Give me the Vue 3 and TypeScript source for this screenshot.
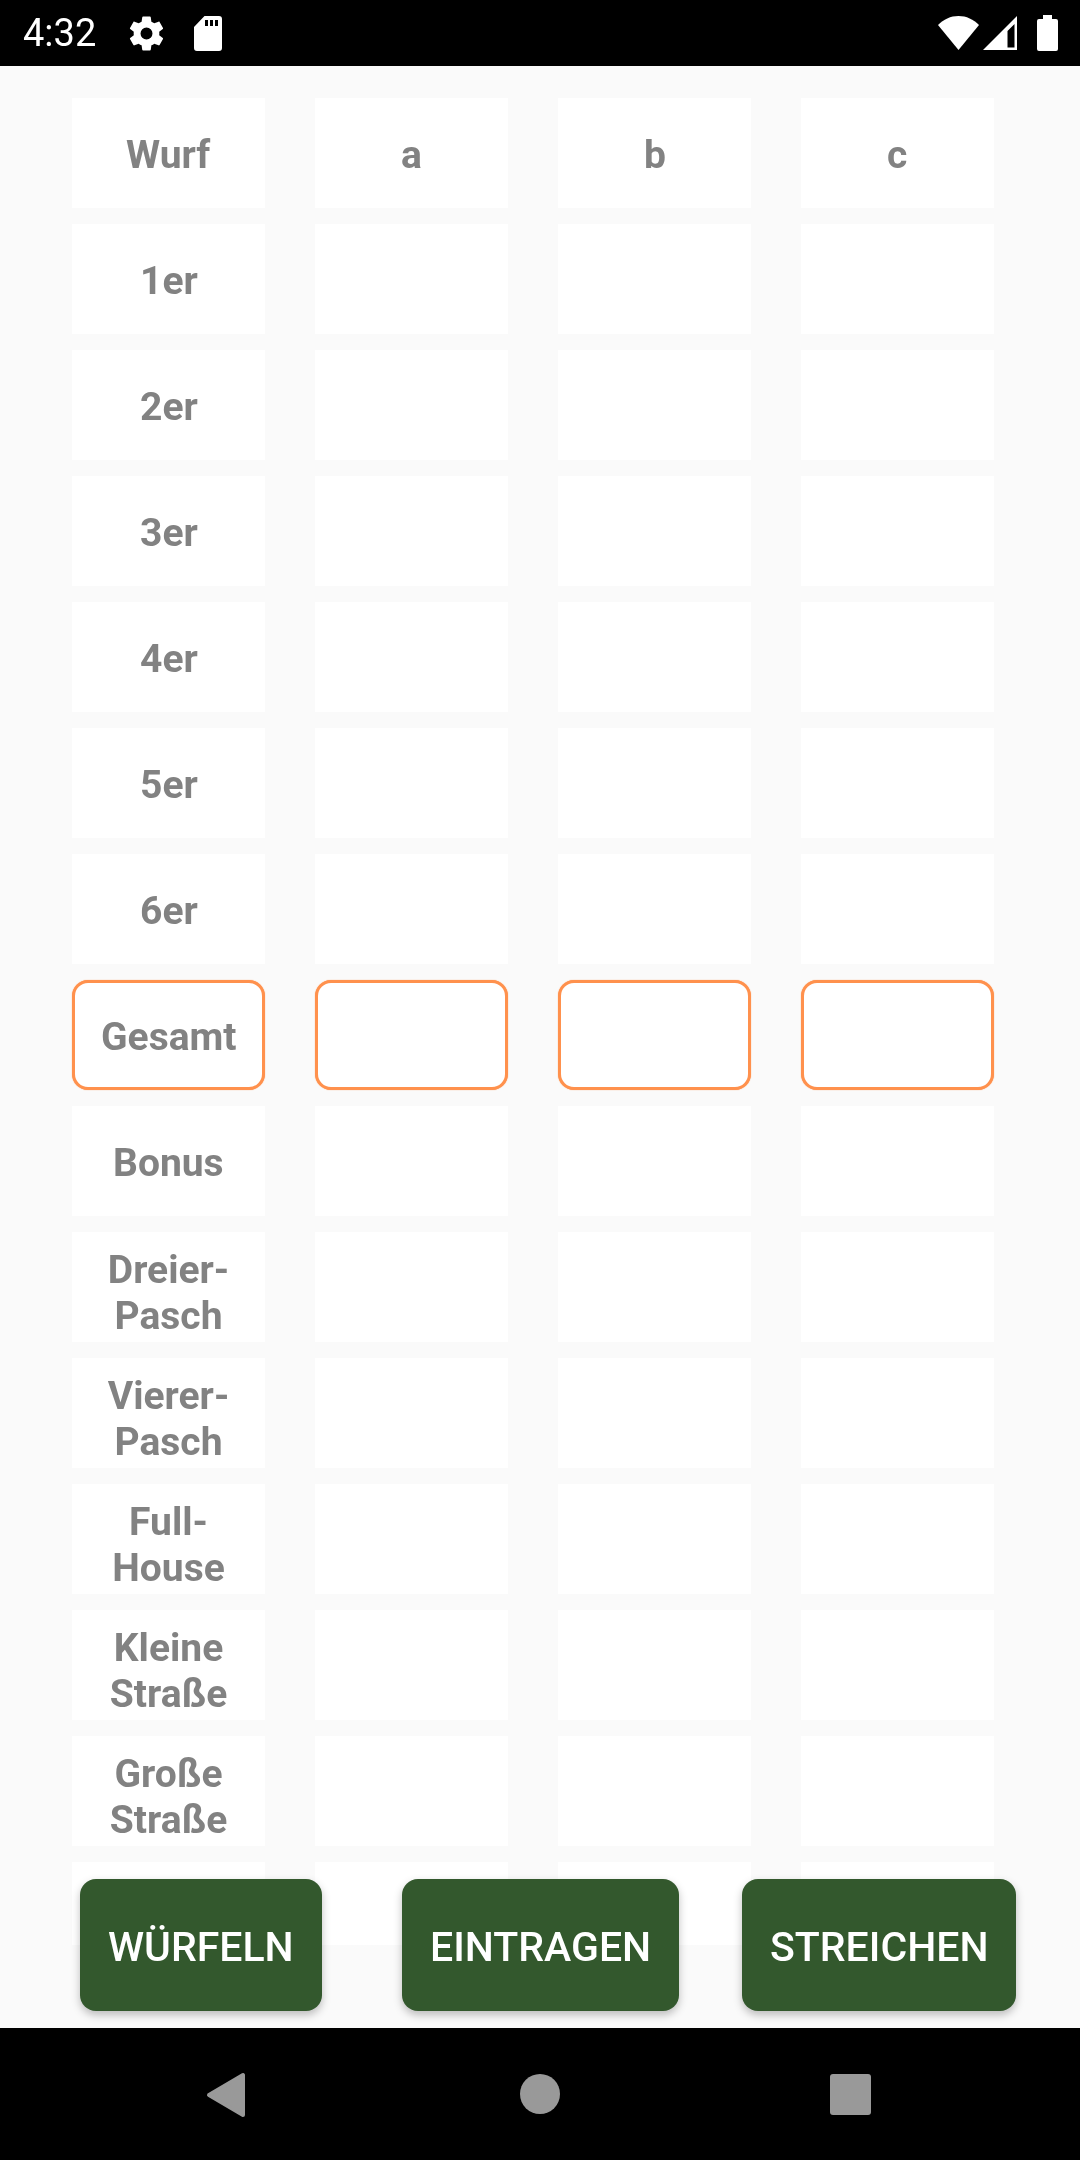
<template>
  <div class="screen">
    <header class="status-bar">
      <span class="time smooth">4:32</span>
      <svg class="icon gear" viewBox="0 0 24 24" width="41" height="41">
        <path fill-rule="evenodd" d="M19.43 12.98c.04-.32.07-.64.07-.98s-.03-.66-.07-.98l2.11-1.65c.19-.15.24-.42.12-.64l-2-3.46c-.12-.22-.39-.3-.61-.22l-2.49 1c-.52-.4-1.08-.73-1.69-.98l-.38-2.65A.488.488 0 0 0 14 2h-4c-.25 0-.46.18-.49.42l-.38 2.65c-.61.25-1.17.59-1.69.98l-2.49-1c-.23-.09-.49 0-.61.22l-2 3.46c-.13.22-.07.49.12.64l2.11 1.65c-.04.32-.07.65-.07.98s.03.66.07.98l-2.11 1.65c-.19.15-.24.42-.12.64l2 3.46c.12.22.39.3.61.22l2.49-1c.52.4 1.08.73 1.69.98l.38 2.65c.03.24.24.42.49.42h4c.25 0 .46-.18.49-.42l.38-2.65c.61-.25 1.17-.59 1.69-.98l2.49 1c.23.09.49 0 .61-.22l2-3.46c.12-.22.07-.49-.12-.64l-2.11-1.65zM12 15.5a3.5 3.5 0 1 1 0-7 3.500 3.500 0 0 1 0 7z" fill="#fff" />
      </svg>
      <svg class="icon sd" viewBox="0 0 28 35" width="28" height="35">
        <path fill-rule="evenodd" d="M10.500 0H25a3 3 0 0 1 3 3v29a3 3 0 0 1-3 3H3a3 3 0 0 1-3-3V11zM11 4v6h3V4zM16 4v6h3V4zM21 4v6h3V4z" fill="#fff" />
      </svg>
      <span class="spacer"></span>
      <svg class="icon wifi" viewBox="0 0 41 34" width="41" height="34">
        <path d="M0 9C5.500 3.400 12.600 0 20.500 0S35.500 3.400 41 9L20.500 34z" fill="#fff" />
      </svg>
      <svg class="icon signal" viewBox="0 0 34 34" width="34" height="34">
        <path fill-rule="evenodd" d="M34 0v34H0zM31.500 8l-7 7v16.500h7z" fill="#fff" />
      </svg>
      <svg class="icon battery" viewBox="0 0 21 36" width="21" height="36">
        <path d="M6 0h9v4h4a2 2 0 0 1 2 2v28a2 2 0 0 1-2 2H2a2 2 0 0 1-2-2V6a2 2 0 0 1 2-2h4z" fill="#fff" />
      </svg>
    </header>

    <main class="content">
      <div class="board">
        <template v-for="(row, i) in rows" :key="i">
          <div class="cell" :class="{ total: row.total }">
            <span class="label smooth" :class="{ wrapped: row.label.length > 6 }">{{ row.label }}</span>
          </div>
          <div v-for="col in ['a', 'b', 'c']" :key="col" class="cell" :class="{ total: row.total }">
            <span v-if="row.header" class="label smooth">{{ col }}</span>
          </div>
        </template>
      </div>

      <div class="actions">
        <button class="action first"><span class="smooth">WÜRFELN</span></button>
        <button class="action"><span class="smooth">EINTRAGEN</span></button>
        <button class="action"><span class="smooth">STREICHEN</span></button>
      </div>
    </main>

    <footer class="nav-bar">
      <svg class="back" viewBox="0 0 40 46" width="40" height="46">
        <path d="M37 3v40L3 23z" fill="#999" stroke="#999" stroke-width="4" stroke-linejoin="round" />
      </svg>
      <span class="home"></span>
      <span class="recent"></span>
    </footer>
  </div>
</template>

<script setup lang="ts">
interface Row {
  label: string
  header?: boolean
  total?: boolean
}

const rows: Row[] = [
  { label: 'Wurf', header: true },
  { label: '1er' },
  { label: '2er' },
  { label: '3er' },
  { label: '4er' },
  { label: '5er' },
  { label: '6er' },
  { label: 'Gesamt', total: true },
  { label: 'Bonus' },
  { label: 'Dreier-Pasch' },
  { label: 'Vierer-Pasch' },
  { label: 'Full-House' },
  { label: 'Kleine Straße' },
  { label: 'Große Straße' },
  { label: '' }, // hidden behind the buttons
]
</script>

<style>
html,
body {
  margin: 0;
  background: #000;
}
</style>

<style scoped>
.screen {
  display: flex;
  flex-direction: column;
  width: 1080px;
  height: 2160px;
  overflow: hidden;
  font-family: Roboto, sans-serif;
}

/* own layer, so the text gets grey antialiasing like the device */
.smooth {
  display: inline-block;
  will-change: transform;
}

.status-bar {
  display: flex;
  align-items: center;
  flex: none;
  height: 66px;
  padding: 0 22px 0 23px;
  box-sizing: border-box;
  background: #000;
  color: #fff;
}

.time {
  font-size: 38px;
  margin-right: 30px;
}

.gear {
  margin-right: 27px;
}

.spacer {
  flex: 1;
}

.wifi {
  margin-right: 4px;
}

.signal {
  margin-right: 20px;
}

.content {
  position: relative;
  flex: none;
  height: 1962px;
  background: #fafafa;
}

.board {
  display: grid;
  grid-template-columns: repeat(4, 193px);
  grid-auto-rows: 110px;
  gap: 16px 50px;
  height: 1879px;
  padding: 32px 0 0 72px;
  box-sizing: border-box;
  overflow: hidden;
}

.cell {
  display: flex;
  align-items: center;
  justify-content: center;
  padding: 0 6px;
  box-sizing: border-box;
  background: #fff;
  color: #828282;
  font-size: 39px;
  font-weight: 700;
  line-height: 46px;
  text-align: center;
}

.label {
  padding-top: 3px;
}

.label.wrapped {
  padding-top: 11px;
}

.cell.total {
  border: 3px solid #ff914d;
  border-radius: 16px;
  box-shadow: 0 0 1px #ff914d;
}

.actions {
  position: absolute;
  top: 1813px;
  left: 80px;
  display: flex;
  gap: 63px;
}

.action {
  height: 132px;
  padding: 4px 28px 0;
  border: none;
  border-radius: 16px;
  background: #33582d;
  box-shadow: 0 4px 8px rgba(0, 0, 0, 0.25);
  color: #fff;
  font-family: inherit;
  font-size: 41px;
  font-weight: 500;
}

.action.first {
  margin-right: 17px;
}

.nav-bar {
  position: relative;
  flex: none;
  height: 132px;
  background: #000;
}

.back {
  position: absolute;
  left: 206px;
  top: 44px;
}

.home {
  position: absolute;
  left: 520px;
  top: 46px;
  width: 40px;
  height: 40px;
  border-radius: 50%;
  background: #999;
}

.recent {
  position: absolute;
  left: 830px;
  top: 46px;
  width: 41px;
  height: 41px;
  border-radius: 3px;
  background: #999;
}
</style>
